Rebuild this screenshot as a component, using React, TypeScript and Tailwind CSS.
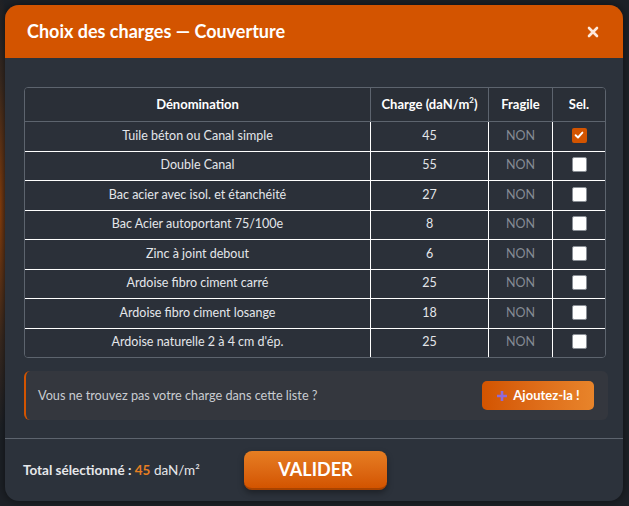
import React from "react";

type Charge = { name: string; value: number; fragile: boolean };

const charges: Charge[] = [
  { name: "Tuile béton ou Canal simple", value: 45, fragile: false },
  { name: "Double Canal", value: 55, fragile: false },
  { name: "Bac acier avec isol. et étanchéité", value: 27, fragile: false },
  { name: "Bac Acier autoportant 75/100e", value: 8, fragile: false },
  { name: "Zinc à joint debout", value: 6, fragile: false },
  { name: "Ardoise fibro ciment carré", value: 25, fragile: false },
  { name: "Ardoise fibro ciment losange", value: 18, fragile: false },
  { name: "Ardoise naturelle 2 à 4 cm d'ép.", value: 25, fragile: false },
];

const cols = "grid grid-cols-[345px_118px_64px_1fr]";

function Checkbox({ checked }: { checked: boolean }) {
  if (checked)
    return (
      <span className="w-[15px] h-[15px] rounded-[2px] bg-[#d35400] flex items-center justify-center">
        <svg width="10" height="10" viewBox="0 0 10 10" fill="none">
          <path d="M1.6 5.2 L4 7.5 L8.4 2.6" stroke="white" strokeWidth="1.9" strokeLinecap="round" strokeLinejoin="round" />
        </svg>
      </span>
    );
  return <span className="w-[15px] h-[15px] rounded-[2px] bg-white border border-[#8a8f96]" />;
}

export default function App() {
  const selected = 0;
  const total = charges[selected].value;

  return (
    <div
      className="w-[629px] h-[506px] p-[5px] bg-[#1d2127] bg-[radial-gradient(ellipse_14px_220px_at_0px_210px,#8a3f0c_0%,#3a2a20_60%,#1d2127_100%)]"
      style={{ fontFamily: "Lato, 'Open Sans', sans-serif" }}
    >
      <div className="w-[618px] h-[496px] rounded-[14px] overflow-hidden bg-[#2c323b] flex flex-col shadow-[0_0_10px_rgba(0,0,0,0.5)]">
        <div className="h-[53px] shrink-0 bg-[#d35400] flex items-center justify-between pl-[22px] pr-[24px]">
          <h2 className="text-[18px] font-bold text-white">Choix des charges — Couverture</h2>
          <svg width="12" height="12" viewBox="0 0 12 12">
            <path d="M2 2 L10 10 M10 2 L2 10" stroke="#fde8dc" strokeWidth="2.6" strokeLinecap="round" />
          </svg>
        </div>

        <div className="pt-[29px] px-[19px]">
          <div className="w-[582px] rounded-[4px] border border-[#5d646e] overflow-hidden text-[12.5px]">
            <div className={`${cols} h-[33px] bg-[#2a2f37] font-bold text-white text-[13px]`}>
              <div className="flex items-center justify-center">Dénomination</div>
              <div className="flex items-center justify-center border-l border-[#5d646e]">
                Charge (daN/m<sup className="text-[8px] -top-[5px]">2</sup>)
              </div>
              <div className="flex items-center justify-center border-l border-[#5d646e]">Fragile</div>
              <div className="flex items-center justify-center border-l border-[#5d646e]">Sel.</div>
            </div>
            {charges.map((c, i) => (
              <div
                key={c.name}
                className={`${cols} h-[29.5px] bg-[#2b3039] text-[#e4e6ea] border-t ${i === 0 ? "border-[#5d646e]" : "border-white"}`}
              >
                <div className="flex items-center justify-center">{c.name}</div>
                <div className="flex items-center justify-center border-l border-white">{c.value}</div>
                <div className="flex items-center justify-center border-l border-white text-[#858b94]">
                  {c.fragile ? "OUI" : "NON"}
                </div>
                <div className="flex items-center justify-center border-l border-white pb-[2px]">
                  <Checkbox checked={i === selected} />
                </div>
              </div>
            ))}
          </div>

          <div className="mt-[13px] w-[584px] h-[49px] rounded-[6px] bg-[#34373e] border-l-2 border-[#d35400] flex items-center justify-between pl-[12px] pr-[14px]">
            <span className="text-[12.7px] text-[#c9ccd1]">Vous ne trouvez pas votre charge dans cette liste ?</span>
            <button className="w-[112px] h-[29px] rounded-[5px] bg-gradient-to-r from-[#d35400] to-[#e8842a] text-white text-[13px] font-bold flex items-center justify-center gap-[5px]">
              <svg width="12" height="12" viewBox="0 0 12 12">
                <path d="M6 1 V11 M1 6 H11" stroke="#8f6ad8" strokeWidth="2.6" />
              </svg>
              Ajoutez-la !
            </button>
          </div>
        </div>

        <div className="mt-[18px] border-t border-[#5d646e] flex-1 flex items-center pl-[18px]">
          <span className="w-[184px] text-[13.5px] text-[#e6e7ea] whitespace-nowrap">
            <b>Total sélectionné : </b>
            <b className="text-[#e67e22]">{total}</b> daN/m²
          </span>
          <button className="ml-[37px] w-[143px] h-[39px] rounded-[8px] bg-gradient-to-b from-[#e67e22] to-[#d35400] border-b-2 border-[#a84300] shadow-[0_3px_6px_rgba(0,0,0,0.35)] text-white text-[18px] font-bold">
            VALIDER
          </button>
        </div>
      </div>
    </div>
  );
}
